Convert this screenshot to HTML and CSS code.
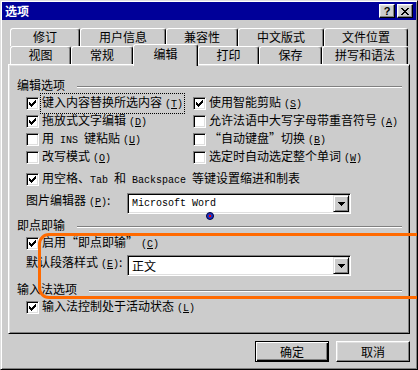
FILE: index.html
```html
<!DOCTYPE html>
<html lang="zh-CN">

<head>
    <meta charset="utf-8">
    <title>选项</title>
    <link rel="stylesheet" href="styles.css">
</head>

<body>
    <div class="window">
        <div class="titlebar">
            <span class="title">选项</span>
            <div class="caption-btns">
                <span class="cbtn help">?</span>
                <span class="cbtn">
                    <svg width="8" height="7" viewBox="0 0 8 7" shape-rendering="crispEdges"><path d="M0 0h2v1h-2z M6 0h2v1h-2z M1 1h2v1h-2z M5 1h2v1h-2z M2 2h4v1h-4z M3 3h2v1h-2z M2 4h4v1h-4z M1 5h2v1h-2z M5 5h2v1h-2z M0 6h2v1h-2z M6 6h2v1h-2z" fill="#000"/></svg>
                </span>
            </div>
        </div>

        <div class="tabs">
            <div class="tab-row">
                <div class="tab" style="width:70px">修订</div>
                <div class="tab" style="width:86px">用户信息</div>
                <div class="tab" style="width:72px">兼容性</div>
                <div class="tab" style="width:86px">中文版式</div>
                <div class="tab" style="width:84px">文件位置</div>
            </div>
            <div class="tab-row">
                <div class="tab" style="width:61px">视图</div>
                <div class="tab" style="width:62px">常规</div>
                <div class="tab active" style="width:65px">编辑</div>
                <div class="tab" style="width:61px">打印</div>
                <div class="tab" style="width:63px">保存</div>
                <div class="tab" style="width:86px">拼写和语法</div>
            </div>
        </div>

        <div class="panel">
            <div class="group-title"><span>编辑选项</span><span class="rule"></span></div>
            <div class="options">
                <div class="check-row">
                    <span class="box"><svg width="7" height="7" viewBox="0 0 7 7" shape-rendering="crispEdges"><path d="M6 0h1v1h-1z M5 1h2v1h-2z M0 2h1v1h-1z M4 2h3v1h-3z M0 3h2v1h-2z M3 3h3v1h-3z M0 4h5v1h-5z M1 5h3v1h-3z M2 6h1v1h-1z" fill="#000"/></svg></span>
                    <span class="label focus">键入内容替换所选内容<span class="key">(<u>T</u>)</span></span>
                </div>
                <div class="check-row">
                    <span class="box"><svg width="7" height="7" viewBox="0 0 7 7" shape-rendering="crispEdges"><path d="M6 0h1v1h-1z M5 1h2v1h-2z M0 2h1v1h-1z M4 2h3v1h-3z M0 3h2v1h-2z M3 3h3v1h-3z M0 4h5v1h-5z M1 5h3v1h-3z M2 6h1v1h-1z" fill="#000"/></svg></span>
                    <span class="label">使用智能剪贴<span class="key">(<u>S</u>)</span></span>
                </div>
                <div class="check-row">
                    <span class="box"><svg width="7" height="7" viewBox="0 0 7 7" shape-rendering="crispEdges"><path d="M6 0h1v1h-1z M5 1h2v1h-2z M0 2h1v1h-1z M4 2h3v1h-3z M0 3h2v1h-2z M3 3h3v1h-3z M0 4h5v1h-5z M1 5h3v1h-3z M2 6h1v1h-1z" fill="#000"/></svg></span>
                    <span class="label">拖放式文字编辑<span class="key">(<u>D</u>)</span></span>
                </div>
                <div class="check-row">
                    <span class="box"></span>
                    <span class="label">允许法语中大写字母带重音符号<span class="key">(<u>A</u>)</span></span>
                </div>
                <div class="check-row">
                    <span class="box"></span>
                    <span class="label">用<span class="en"> INS </span>键粘贴<span class="key">(<u>U</u>)</span></span>
                </div>
                <div class="check-row">
                    <span class="box"></span>
                    <span class="label">“自动键盘”切换<span class="key">(<u>B</u>)</span></span>
                </div>
                <div class="check-row">
                    <span class="box"></span>
                    <span class="label">改写模式<span class="key">(<u>O</u>)</span></span>
                </div>
                <div class="check-row">
                    <span class="box"></span>
                    <span class="label">选定时自动选定整个单词<span class="key">(<u>W</u>)</span></span>
                </div>
            </div>

            <div class="check-row single">
                <span class="box"><svg width="7" height="7" viewBox="0 0 7 7" shape-rendering="crispEdges"><path d="M6 0h1v1h-1z M5 1h2v1h-2z M0 2h1v1h-1z M4 2h3v1h-3z M0 3h2v1h-2z M3 3h3v1h-3z M0 4h5v1h-5z M1 5h3v1h-3z M2 6h1v1h-1z" fill="#000"/></svg></span>
                <span class="label">用空格、<span class="en">Tab </span>和<span class="en"> Backspace </span>等键设置缩进和制表</span>
            </div>

            <div class="field-row picture">
                <span class="field-label">图片编辑器<span class="key">(<u>P</u>)</span>:</span>
                <div class="combo">
                    <span class="combo-value en">Microsoft Word</span>
                    <span class="drop"><svg width="7" height="4" viewBox="0 0 7 4" shape-rendering="crispEdges"><path d="M0 0h7v1h-7z M1 1h5v1h-5z M2 2h3v1h-3z M3 3h1v1h-1z" fill="#000"/></svg></span>
                </div>
            </div>

            <div class="group-title second"><span>即点即输</span><span class="rule"></span></div>
            <div class="check-row single">
                <span class="box"><svg width="7" height="7" viewBox="0 0 7 7" shape-rendering="crispEdges"><path d="M6 0h1v1h-1z M5 1h2v1h-2z M0 2h1v1h-1z M4 2h3v1h-3z M0 3h2v1h-2z M3 3h3v1h-3z M0 4h5v1h-5z M1 5h3v1h-3z M2 6h1v1h-1z" fill="#000"/></svg></span>
                <span class="label">启用“即点即输”<span class="key">(<u>C</u>)</span></span>
            </div>
            <div class="field-row style">
                <span class="field-label">默认段落样式<span class="key">(<u>E</u>)</span>:</span>
                <div class="combo">
                    <span class="combo-value">正文</span>
                    <span class="drop"><svg width="7" height="4" viewBox="0 0 7 4" shape-rendering="crispEdges"><path d="M0 0h7v1h-7z M1 1h5v1h-5z M2 2h3v1h-3z M3 3h1v1h-1z" fill="#000"/></svg></span>
                </div>
            </div>

            <div class="group-title third"><span>输入法选项</span><span class="rule"></span></div>
            <div class="check-row single">
                <span class="box"><svg width="7" height="7" viewBox="0 0 7 7" shape-rendering="crispEdges"><path d="M6 0h1v1h-1z M5 1h2v1h-2z M0 2h1v1h-1z M4 2h3v1h-3z M0 3h2v1h-2z M3 3h3v1h-3z M0 4h5v1h-5z M1 5h3v1h-3z M2 6h1v1h-1z" fill="#000"/></svg></span>
                <span class="label">输入法控制处于活动状态<span class="key">(<u>L</u>)</span></span>
            </div>
        </div>

        <div class="actions">
            <button class="btn default">确定</button>
            <button class="btn">取消</button>
        </div>

        <!-- overlays: mouse cursor dot and the orange highlight mark -->
        <svg class="cursor-dot" width="8" height="8" viewBox="0 0 8 8">
            <circle cx="4" cy="4" r="3.5" fill="#2030c0" stroke="#000040" stroke-width="1"/>
            <rect x="3" y="3" width="2" height="2" fill="#ff0000"/>
        </svg>
        <div class="highlight-mark"></div>
    </div>
</body>

</html>
```

FILE: styles.css
```css
html,
body {
    margin: 0;
    padding: 0;
    background-color: #cccccc;
    overflow: hidden;
}

body {
    font-family: "Noto Sans CJK SC", "Liberation Sans", sans-serif;
    font-size: 12px;
    color: #000;
}

.window {
    position: relative;
    width: 418px;
    height: 370px;
    box-sizing: border-box;
    padding: 1px;
    border: 1px solid;
    border-color: #dfdfdf #000 #000 #dfdfdf;
    box-shadow: inset 1px 1px #fff, inset -1px -1px #808080;
    overflow: hidden;
}

.titlebar {
    height: 18px;
    background-color: #000099;
    display: flex;
    align-items: center;
    justify-content: space-between;
    padding: 0 3px;
}

.title {
    color: #fff;
    font-weight: bold;
    line-height: 18px;
}

.caption-btns {
    display: flex;
    gap: 2px;
}

.cbtn {
    width: 16px;
    height: 14px;
    box-sizing: border-box;
    border: 1px solid;
    border-color: #fff #000 #000 #fff;
    box-shadow: inset -1px -1px #808080, inset 1px 1px #dfdfdf;
    background-color: #cccccc;
    display: flex;
    align-items: center;
    justify-content: center;
}

.help {
    font-family: "Liberation Sans", sans-serif;
    font-weight: bold;
    font-size: 11px;
    line-height: 12px;
}

.tabs {
    margin: 8px 0 0 8px;
}

.tab-row {
    display: flex;
    height: 18px;
}

.tab {
    box-sizing: border-box;
    height: 100%;
    border: 1px solid;
    border-color: #fff #000 transparent #fff;
    border-bottom: none;
    border-radius: 3px 3px 0 0;
    box-shadow: inset -1px 0 #808080;
    background-color: #cccccc;
    text-align: center;
    line-height: 16px;
}

.tab.active {
    position: relative;
    z-index: 1;
    height: 22px;
    margin-top: -2px;
    line-height: 18px;
}

.panel {
    width: 402px;
    height: 270px;
    margin-left: 6px;
    box-sizing: border-box;
    border: 1px solid;
    border-color: #fff #000 #000 #fff;
    box-shadow: inset 1px 1px #dfdfdf, inset -1px -1px #808080;
    padding: 12px 7px 0 8px;
}

.group-title {
    display: flex;
    align-items: center;
    height: 16px;
    line-height: 16px;
}

.group-title .rule {
    flex: 1;
    height: 0;
    margin: 4px 0 0 12px;
    border-top: 1px solid #808080;
    border-bottom: 1px solid #fff;
}

.group-title.second {
    margin-top: 3px;
}

.group-title.third {
    margin-top: 5px;
}

.options {
    display: grid;
    grid-template-columns: 167px 1fr;
    margin: 1px 0 0 9px;
}

.check-row {
    display: flex;
    align-items: center;
    height: 18px;
}

.check-row.single {
    margin: 4px 0 0 9px;
}

.group-title+.check-row.single {
    margin-top: 1px;
}

.box {
    width: 13px;
    height: 13px;
    box-sizing: border-box;
    border: 1px solid;
    border-color: #808080 #fff #fff #808080;
    box-shadow: inset 1px 1px #000, inset -1px -1px #dfdfdf;
    background-color: #fff;
    display: flex;
    align-items: center;
    justify-content: center;
}

.label {
    margin-left: 1px;
    padding: 0 1px;
    border: 1px dotted transparent;
    line-height: 16px;
    white-space: nowrap;
}

.label.focus {
    border-color: #000;
}

.en,
.key {
    font-family: "Liberation Mono", monospace;
    font-size: 10px;
}

.key {
    margin-left: 3px;
}

.field-row {
    display: flex;
    align-items: center;
    margin-left: 9px;
}

.field-row.picture {
    margin-top: 5px;
}

.field-row.style {
    margin-top: 3px;
}

.field-label {
    width: 101px;
    line-height: 16px;
    margin-top: -4px;
    white-space: nowrap;
}

.combo {
    width: 224px;
    height: 21px;
    box-sizing: border-box;
    border: 1px solid;
    border-color: #808080 #fff #fff #808080;
    box-shadow: inset 1px 1px #000, inset -1px -1px #dfdfdf;
    background-color: #fff;
    padding: 1px;
    display: flex;
    align-items: center;
    justify-content: space-between;
}

.combo-value {
    padding-left: 3px;
    line-height: 16px;
}

.combo-value.en {
    font-size: 10px;
}

.drop {
    width: 16px;
    height: 17px;
    box-sizing: border-box;
    border: 1px solid;
    border-color: #dfdfdf #000 #000 #dfdfdf;
    box-shadow: inset 1px 1px #fff, inset -1px -1px #808080;
    background-color: #cccccc;
    display: flex;
    align-items: center;
    justify-content: center;
}

.actions {
    display: flex;
    justify-content: flex-end;
    gap: 7px;
    margin-top: 7px;
    padding-right: 6px;
}

.btn {
    width: 74px;
    height: 21px;
    padding: 0;
    box-sizing: border-box;
    border: 1px solid;
    border-color: #fff #000 #000 #fff;
    box-shadow: inset -1px -1px #808080, inset 1px 1px #dfdfdf;
    background-color: #cccccc;
    font-family: "Noto Sans CJK SC", sans-serif;
    font-size: 12px;
    color: #000;
}

.btn.default {
    border-color: #000;
    box-shadow: inset 1px 1px #fff, inset -1px -1px #000, inset -2px -2px #808080;
}

.cursor-dot {
    position: absolute;
    left: 205px;
    top: 211px;
}

.highlight-mark {
    position: absolute;
    left: 37px;
    top: 232px;
    width: 400px;
    height: 66px;
    box-sizing: border-box;
    border: 3px solid #ff6a00;
    border-radius: 11px;
}
```
